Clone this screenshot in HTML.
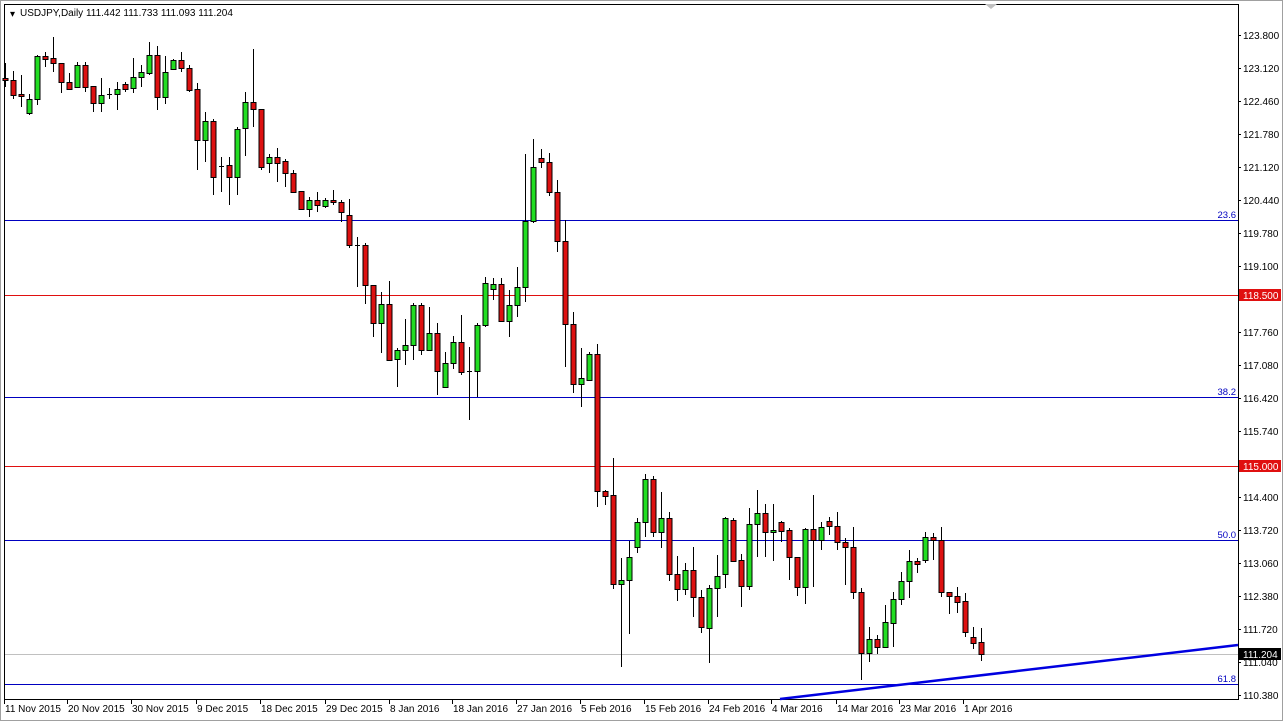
<!DOCTYPE html>
<html><head><meta charset="utf-8"><style>
html,body{margin:0;padding:0;background:#fff;width:1283px;height:721px;overflow:hidden}
svg{display:block;font-family:"Liberation Sans",sans-serif}
</style></head><body>
<svg id="c" width="1283" height="721" viewBox="0 0 1283 721" xmlns="http://www.w3.org/2000/svg">
<rect x="0" y="0" width="1283" height="721" fill="#fff"/>
<rect x="0.5" y="0.5" width="1282" height="720" fill="none" stroke="#a0a0a0"/>
<rect x="4.5" y="4.5" width="1234" height="695" fill="#fff" stroke="#000"/>
<g id="lines" shape-rendering="crispEdges">
<rect x="5" y="220" width="1233" height="1" fill="#0000c0"/>
<rect x="5" y="295" width="1233" height="1" fill="#e01010"/>
<rect x="5" y="397" width="1233" height="1" fill="#0000c0"/>
<rect x="5" y="466" width="1233" height="1" fill="#e01010"/>
<rect x="5" y="540" width="1233" height="1" fill="#0000c0"/>
<rect x="5" y="654" width="1233" height="1" fill="#c0c0c0"/>
<rect x="5" y="684" width="1233" height="1" fill="#0000c0"/>
</g>
<line x1="780" y1="699" x2="1238" y2="645" stroke="#0000e0" stroke-width="2.5"/>
<g font-size="9.5" fill="#0000c0" text-anchor="end">
<text x="1236" y="218">23.6</text><text x="1236" y="395">38.2</text><text x="1236" y="538">50.0</text><text x="1236" y="682">61.8</text>
</g>
<g id="candles"></g>
<text x="10" y="17" font-size="10">▾</text>
<text x="20" y="16" font-size="10" fill="#000">USDJPY,Daily  111.442 111.733 111.093 111.204</text>
<g id="axis" font-size="10" fill="#000"></g>
<rect x="1239" y="289" width="42" height="12" fill="#e01010"/>
<text x="1243" y="299" font-size="10" fill="#fff">118.500</text>
<rect x="1239" y="460" width="42" height="12" fill="#e01010"/>
<text x="1243" y="470" font-size="10" fill="#fff">115.000</text>
<rect x="1239" y="648" width="42" height="12" fill="#000"/>
<text x="1243" y="658" font-size="10" fill="#fff">111.204</text>
<path d="M985 4 L991 9 L997 4Z" fill="#c0c0c0"/>
</svg>
<script>
var D=[
[78,80,63,87,0],[80,95,71,99,0],[94,96,75,107,0],[113,99,94,115,1],[99,56,55,105,1],[56,59,52,67,0],[58,63,37,72,0],[63,82,63,93,0],[82,89,73,90,0],[87,65,62,87,1],[65,87,62,92,0],[86,103,86,112,0],[103,95,78,112,1],[94,94,88,99,2],[94,89,82,110,1],[84,89,82,92,0],[88,77,58,93,1],[77,72,65,87,1],[73,55,42,75,1],[55,97,46,110,0],[97,72,56,104,1],[69,60,59,69,1],[60,68,52,72,0],[68,90,65,92,0],[89,140,83,170,0],[140,121,112,162,1],[121,177,119,195,0],[166,166,157,192,2],[165,177,157,205,0],[177,129,127,195,1],[128,102,92,156,1],[102,109,49,127,0],[109,167,109,170,0],[163,157,154,173,1],[157,163,148,182,0],[161,173,159,187,0],[173,192,170,193,0],[191,209,191,210,0],[209,200,197,217,1],[200,205,192,212,0],
[206,200,198,208,1],[200,202,190,205,0],[202,212,200,222,0],[215,245,199,248,0],[245,245,237,287,2],[245,285,243,304,0],[285,323,285,337,0],[323,304,292,353,1],[304,360,281,360,0],[359,350,348,387,1],[350,345,319,365,1],[345,305,303,360,1],[305,350,303,355,0],[350,333,307,350,1],[333,371,323,395,0],[387,363,352,387,1],[363,342,336,369,1],[342,372,315,375,0],[371,371,347,420,2],[371,325,323,397,1],[325,283,277,327,1],[289,284,278,300,1],[284,321,278,321,0],[321,305,290,337,1],[305,287,267,317,1],[287,221,154,302,1],[221,167,139,223,1],[158,162,149,168,0],[162,192,153,196,0],[192,241,180,252,0],[241,324,220,367,0],[324,384,312,393,0],[384,378,348,407,1],[380,354,352,380,1],[354,491,344,507,0],[491,496,490,505,0],[495,584,458,589,0],[584,580,558,667,1],[580,557,541,634,1],[547,522,518,553,1],[522,479,474,537,1],[479,532,476,537,0],[532,518,492,548,1],[518,574,512,581,0],[574,589,556,601,0],[589,570,563,595,1],[570,597,547,617,0],[597,627,590,633,0],[628,588,585,663,1],[588,576,555,617,1],[574,518,517,588,1],[520,561,518,561,0],[560,586,554,607,0],[586,524,508,590,1],[524,513,490,557,1],[513,532,504,557,0],[532,530,504,561,1],[522,531,521,542,0],[530,557,528,580,0],[557,587,557,596,0],[587,529,528,604,1],[529,540,495,587,0],[540,527,522,550,1],[521,526,517,535,0],[526,542,512,550,0],[542,547,538,585,0],[547,592,527,599,0],[592,653,588,680,0],[653,639,627,662,1],[639,647,635,654,0],[647,622,605,647,1],[623,599,592,647,1],[599,581,572,605,1],[581,561,550,598,1],[561,564,558,573,0],[560,537,532,563,1],[537,540,533,560,0],[540,592,527,597,0],[592,596,592,614,0],[596,602,587,613,0],[601,632,593,637,0],[637,643,627,649,0],[642,654,628,661,0]];
var g=document.getElementById('candles'),s='';
D.forEach(function(c,i){var x=5+8*i;var t=Math.min(c[0],c[1]),b=Math.max(c[0],c[1]);
s+='<line x1="'+(x+.5)+'" y1="'+c[2]+'" x2="'+(x+.5)+'" y2="'+c[3]+'" stroke="#000"/>';
if(c[4]==2||b-t<1){s+='<line x1="'+(x-2)+'" y1="'+(t+.5)+'" x2="'+(x+3)+'" y2="'+(t+.5)+'" stroke="#000"/>';}
else s+='<rect x="'+(x-2.5+.5)+'" y="'+(t+.5)+'" width="5" height="'+(b-t)+'" fill="'+(c[4]?'#22dd22':'#dd1111')+'" stroke="#000"/>';});
g.innerHTML=s;
var a=document.getElementById('axis'),h='';
var P=['123.800','123.120','122.460','121.780','121.120','120.440','119.780','119.100','118.440','117.760','117.080','116.420','115.740','115.060','114.400','113.720','113.060','112.380','111.720','111.040','110.380'];
P.forEach(function(p,i){var y=35+i*33;if(i==8||i==13)return;h+='<line x1="1238" y1="'+(y+.5)+'" x2="1241" y2="'+(y+.5)+'" stroke="#000"/><text x="1243" y="'+(y+4)+'">'+p+'</text>';});
var T=[['11 Nov 2015',5],['20 Nov 2015',68],['30 Nov 2015',132],['9 Dec 2015',197],['18 Dec 2015',261],['29 Dec 2015',326],['8 Jan 2016',390],['18 Jan 2016',453],['27 Jan 2016',517],['5 Feb 2016',581],['15 Feb 2016',645],['24 Feb 2016',709],['4 Mar 2016',772],['14 Mar 2016',837],['23 Mar 2016',900],['1 Apr 2016',964]];
T.forEach(function(t){h+='<line x1="'+(t[1]-.5)+'" y1="700" x2="'+(t[1]-.5)+'" y2="704" stroke="#000"/><text x="'+t[1]+'" y="712">'+t[0]+'</text>';});
a.innerHTML=h;
</script>
</body></html>
